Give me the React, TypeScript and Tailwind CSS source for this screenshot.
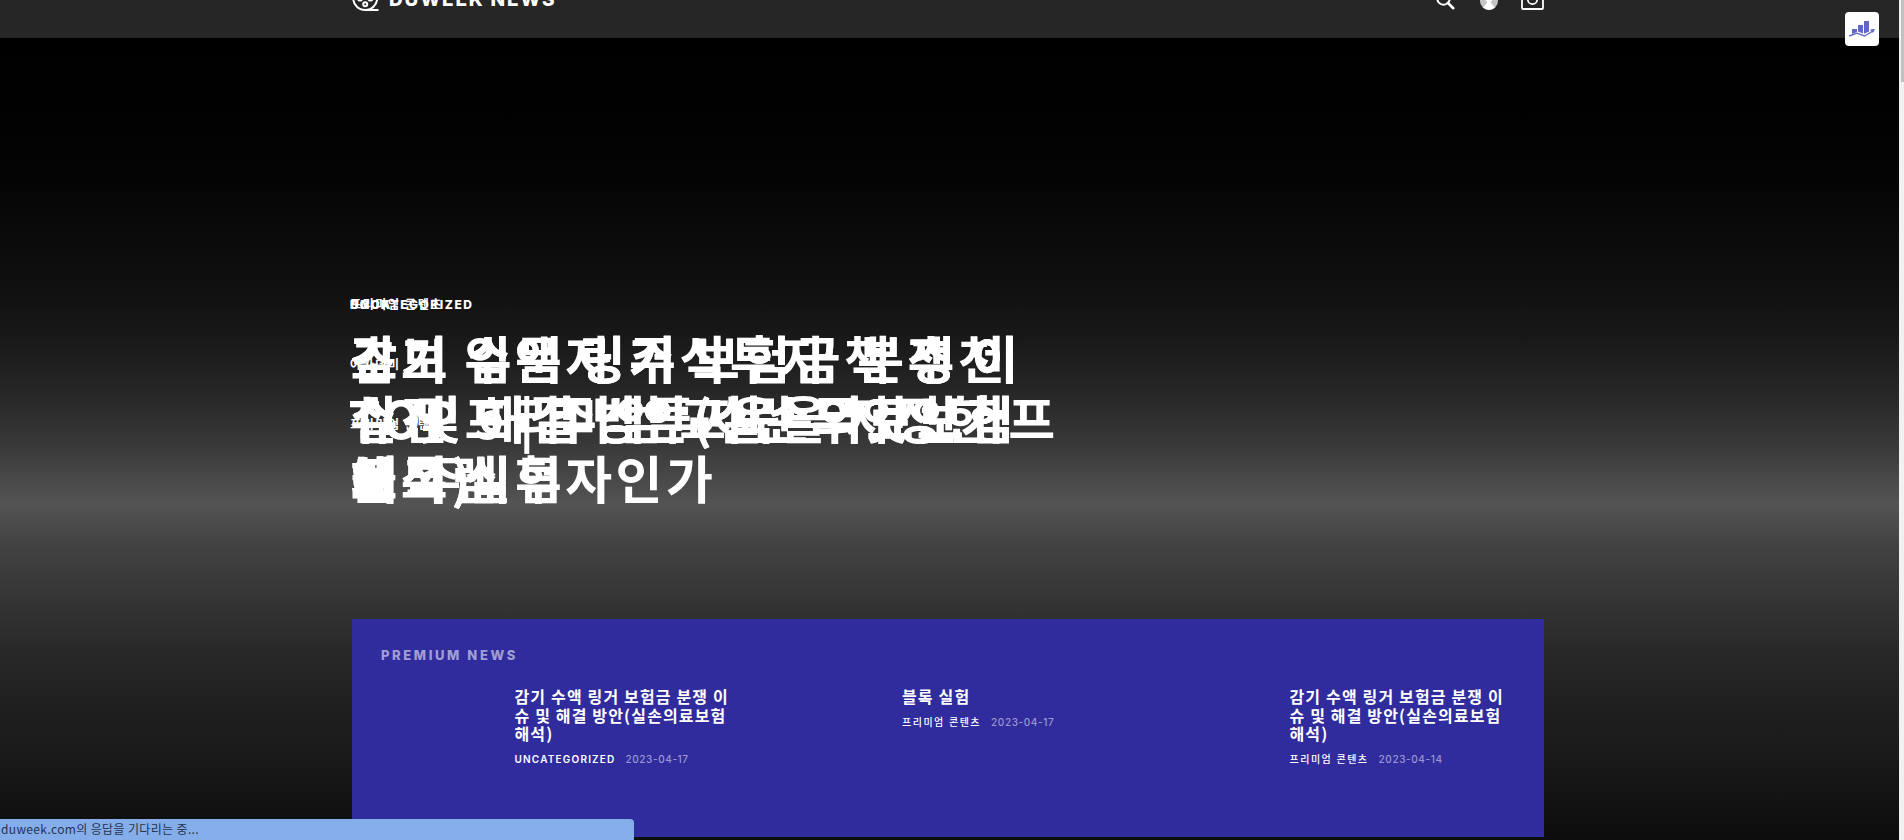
type Slide = {
  id: number;
  category: string;
  title: string[];
};

type Post = {
  id: number;
  title: string[];
  category: string;
  date: string;
};

const insuranceTitle = [
  '감기 수액 링거 보험금 분쟁 이',
  '슈 및 해결 방안(실손의료보험',
  '해석)',
];

const slides: Slide[] = [
  { id: 1, category: 'UNCATEGORIZED', title: insuranceTitle },
  { id: 2, category: '프리미엄 콘텐츠', title: ['블록 실험'] },
  { id: 3, category: '프리미엄 콘텐츠', title: insuranceTitle },
  {
    id: 4,
    category: 'BOOK',
    title: [
      '초보 입문자 주식투자 책 추천',
      'TOP 5 | 주식투자란 무엇인가',
      '왜 주식투자인가',
    ],
  },
  {
    id: 5,
    category: '아카데미',
    title: ['실전 프리미엄 교육을 지정한 프', '로그램'],
  },
];

const posts: Post[] = [
  {
    id: 1,
    title: insuranceTitle,
    category: 'UNCATEGORIZED',
    date: '2023-04-17',
  },
  {
    id: 2,
    title: ['블록 실험'],
    category: '프리미엄 콘텐츠',
    date: '2023-04-17',
  },
  {
    id: 3,
    title: insuranceTitle,
    category: '프리미엄 콘텐츠',
    date: '2023-04-14',
  },
];

const isLatin = (text: string) => /^[A-Z]+$/.test(text);

const ReelIcon = () => (
  <svg
    className="h-7 w-7"
    viewBox="0 0 28 28"
    fill="none"
    stroke="white"
    strokeWidth="2"
  >
    <circle cx="13.2" cy="14" r="12" />
    <path d="M13.5 26H26.5" />
    <circle cx="13.2" cy="7.5" r="2" />
    <circle cx="8" cy="14.6" r="2" />
    <circle cx="18.4" cy="14.6" r="2" />
    <circle cx="13.2" cy="20.3" r="2" />
  </svg>
);

const SearchIcon = () => (
  <svg
    className="h-[19px] w-[19px]"
    viewBox="0 0 19 19"
    fill="none"
    stroke="white"
    strokeLinecap="round"
  >
    <circle cx="7.5" cy="7.5" r="6.2" strokeWidth="2" />
    <path d="M12 12L17.3 17.2" strokeWidth="2.6" />
  </svg>
);

const AvatarIcon = () => (
  <svg className="h-[18px] w-[18px]" viewBox="0 0 18 18">
    <circle cx="9" cy="9" r="9" fill="#c4c4c4" />
    <path d="M9 8L3.2 15.8A9 9 0 0 0 14.8 15.8Z" fill="white" />
    <circle cx="9" cy="7" r="3.4" fill="white" />
  </svg>
);

const BagIcon = () => (
  <svg
    className="h-[23px] w-[23px]"
    viewBox="0 0 23 23"
    fill="none"
    stroke="white"
    strokeWidth="1.8"
  >
    <rect x="1" y="1" width="21" height="21" rx="1" />
    <path d="M6.8 9V12.4A4.7 4.7 0 0 0 16.2 12.4V9" />
  </svg>
);

const ChartIcon = () => (
  <svg className="h-[18px] w-[26px]" viewBox="0 0 26 18" fill="#6367c4">
    <path d="M3 9H8V12L3 14Z" />
    <path d="M9 5H14V13.4L9 11.6Z" />
    <path d="M15 1H20V11.4L15 13.8Z" />
    <path
      d="M0 16L8 13.2L15.5 16L24 11"
      fill="none"
      stroke="#6367c4"
      strokeWidth="1.4"
    />
    <path d="M21 9.6L26 8.9L24 13Z" />
  </svg>
);

const Header = () => (
  <header className="h-[38px] overflow-hidden bg-[#262626] pr-[355px] pl-[352px]">
    <div className="-mt-4 flex h-7 items-center justify-between">
      <div className="flex items-center">
        <ReelIcon />
        <span className="mt-[3px] ml-[9px] text-[19px] leading-7 font-extrabold tracking-[1.8px] whitespace-nowrap">
          DUWEEK NEWS
        </span>
      </div>
      <div className="flex items-end gap-[25px] pr-[5px]">
        <SearchIcon />
        <AvatarIcon />
        <span className="-ml-0.5">
          <BagIcon />
        </span>
      </div>
    </div>
  </header>
);

const HeroSlide = ({ slide }: { slide: Slide }) => (
  <article className="col-start-1 row-start-1">
    <p
      className={
        isLatin(slide.category)
          ? 'mb-3 ml-px text-xs leading-5 font-extrabold tracking-[1.5px]'
          : 'mb-3 ml-px text-xs leading-5 font-bold tracking-[1.6px]'
      }
    >
      {slide.category}
    </p>
    <h2 className="ml-[1.5px] font-['Noto_Sans_CJK_KR',sans-serif] text-[51px] leading-[60px] font-bold tracking-[3.4px] [word-spacing:-1.5px]">
      {slide.title.map((line) => (
        <span
          key={line}
          className={
            line.startsWith('TOP')
              ? '-ml-0.5 block tracking-[2.8px] whitespace-nowrap'
              : 'block whitespace-nowrap'
          }
        >
          {line}
        </span>
      ))}
    </h2>
  </article>
);

const PostCard = ({ post }: { post: Post }) => (
  <article className="w-[387.5px] pl-[133.5px]">
    <h3 className="font-['Noto_Sans_CJK_KR',sans-serif] text-[16px] leading-[18.7px] font-bold tracking-[1.15px]">
      {post.title.map((line) => (
        <span key={line} className="block whitespace-nowrap">
          {line}
        </span>
      ))}
    </h3>
    <div className="mt-2 flex h-4 items-center gap-[10px] text-[10px] leading-4 whitespace-nowrap">
      <span
        className={
          isLatin(post.category)
            ? 'font-semibold tracking-[1.2px]'
            : 'font-medium tracking-[1.5px]'
        }
      >
        {post.category}
      </span>
      <span className="font-medium tracking-[0.6px] text-[#9a97cf]">
        {post.date}
      </span>
    </div>
  </article>
);

export default function App() {
  return (
    <div className="relative h-[840px] overflow-hidden bg-black font-['Inter','Noto_Sans_CJK_KR',sans-serif] text-white">
      <Header />
      <main className="h-[802px] bg-[linear-gradient(to_bottom,#000_0px,#010101_70px,#050505_147px,#101010_250px,#191919_302px,#262626_353px,#383838_405px,#505050_457px,#545454_466px,#4d4d4d_482px,#424242_508px,#353535_560px,#292929_612px,#202020_663px,#1a1a1a_715px,#121212_767px,#0c0c0c_802px)]">
        <div className="grid h-[581px] items-end pb-28 pl-[349px]">
          {slides.map((slide) => (
            <HeroSlide key={slide.id} slide={slide} />
          ))}
        </div>
        <section className="ml-[352px] h-[218px] w-[1192px] bg-[#312c9e] pt-[26px] pl-[29px]">
          <h4 className="text-[13px] leading-5 font-extrabold tracking-[2.6px] text-[#a19ed5]">
            PREMIUM NEWS
          </h4>
          <div className="mt-[22px] flex">
            {posts.map((post) => (
              <PostCard key={post.id} post={post} />
            ))}
          </div>
        </section>
      </main>

      <button className="absolute top-3 left-[1845px] flex h-[34px] w-[34px] items-center justify-center rounded bg-white">
        <ChartIcon />
      </button>
      <div className="absolute top-0 right-0 flex h-full w-[5px] justify-end bg-[#f1f1f1]">
        <div className="h-[82px] w-[3px] bg-[#c1c1c1]" />
      </div>
      <div className="absolute bottom-0 left-0 h-[21px] w-[634px] rounded-tr bg-[#85ade9] pl-px font-['Noto_Sans_CJK_KR',sans-serif] text-xs leading-5 tracking-[0.35px] text-[#24344f]">
        duweek.com의 응답을 기다리는 중...
      </div>
    </div>
  );
}
